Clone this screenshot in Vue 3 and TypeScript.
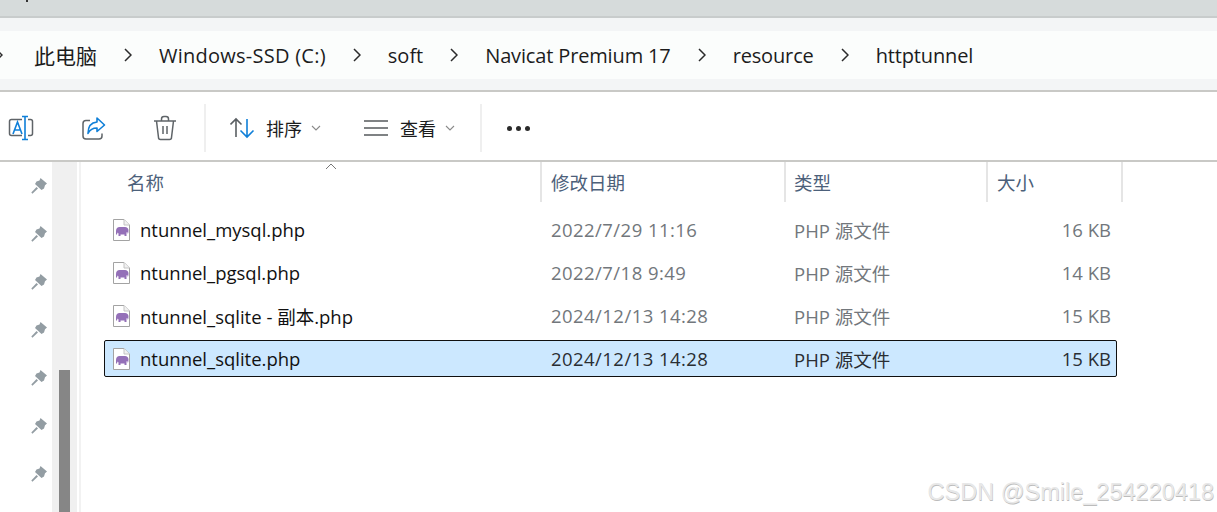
<template>
  <div class="explorer">
    <div class="titlebar"></div>

    <div class="address">
      <div class="crumbs">
        <svg class="chev first" viewBox="0 0 8 14"><polyline points="1 1 7 7 1 13" /></svg>
        <template v-for="(c, i) in crumbs" :key="c.label">
          <span class="crumb" :class="c.cls">{{ c.label }}</span>
          <svg v-if="i < crumbs.length - 1" class="chev" viewBox="0 0 8 14"><polyline points="1 1 7 7 1 13" /></svg>
        </template>
      </div>
    </div>

    <div class="toolbar">
      <button class="tool">
        <svg class="ic" viewBox="0 0 26 26" fill="none">
          <path d="M14 4.500H3.500a2 2 0 0 0-2 2v12a2 2 0 0 0 2 2H14M20 4.500h2.500a2 2 0 0 1 2 2v12a2 2 0 0 1-2 2H20" stroke="#5f6468" stroke-width="1.500" />
          <path d="M14 1.500h6M14 24.500h6M17 1.500V24.500" stroke="#0f7fd8" stroke-width="1.600" />
          <path d="M5 19 9.500 7 14 19M6.500 15h6" stroke="#0f7fd8" stroke-width="1.600" />
        </svg>
      </button>
      <button class="tool">
        <svg class="ic" viewBox="0 0 26 26" fill="none">
          <path d="M10 5.500H6a3 3 0 0 0-3 3V21a3 3 0 0 0 3 3h13a3 3 0 0 0 3-3v-2.500" stroke="#5f6468" stroke-width="1.500" />
          <path d="M17 3 24.500 10 17 16.500V13C13 13 10 14.500 8 18.500 8 12 11 7.500 17 7z" stroke="#0f7fd8" stroke-width="1.600" stroke-linejoin="round" />
        </svg>
      </button>
      <button class="tool">
        <svg class="ic" viewBox="0 0 26 26" fill="none" stroke="#5f6468" stroke-width="1.500">
          <path d="M2 6h22M9.500 6V4A2.500 2.500 0 0 1 12 1.500h2A2.500 2.500 0 0 1 16.500 4v2M4.500 6l2 16.500a2 2 0 0 0 2 2h9a2 2 0 0 0 2-2L21.500 6M11 11v8M15 11v8" />
        </svg>
      </button>
      <div class="tool-sep"></div>
      <button class="tool-menu sort">
        <svg class="ic" viewBox="0 0 26 26" fill="none" stroke-width="1.600">
          <path d="M6 22V4M.5 9.500 6 4l5.500 5.500" stroke="#5a5f63" />
          <path d="M17 4v18M10.500 15.500 17 22l6.500-6.500" stroke="#0f7fd8" />
        </svg>
        <span>排序</span>
        <svg class="caret" viewBox="0 0 10 6"><polyline points="1 1 5 5 9 1" /></svg>
      </button>
      <button class="tool-menu view">
        <svg class="lines" viewBox="0 0 24 16" fill="none" stroke="#55595c" stroke-width="1.500">
          <path d="M0 1h24M0 8h24M0 15h24" />
        </svg>
        <span>查看</span>
        <svg class="caret" viewBox="0 0 10 6"><polyline points="1 1 5 5 9 1" /></svg>
      </button>
      <div class="tool-sep last"></div>
      <div class="dots"><i></i><i></i><i></i></div>
    </div>

    <div class="main">
      <aside class="side">
        <div class="pins">
          <svg v-for="n in 7" :key="n" class="pin" viewBox="0 0 16 16">
            <path d="M9.500 0 16 5.500 14 7.200 13 10.500 10.500 12 4 6 5.500 3.500 8.500 2.500z" />
            <path d="M5.500 9 .3 14.600 1.400 15.700 7 10.500z" />
          </svg>
        </div>
        <div class="track"><div class="thumb"></div></div>
      </aside>

      <section class="list">
        <svg class="sort-up" viewBox="0 0 12 7"><polyline points="1 6 6 1 11 6" /></svg>
        <div class="head">
          <div v-for="c in columns" :key="c.label" class="hcell" :class="c.cls">{{ c.label }}</div>
        </div>
        <div class="rows">
          <div v-for="f in files" :key="f.name" class="row" :class="{ selected: f.selected }">
            <div class="cell name">
              <svg class="file" viewBox="0 0 17 22">
                <path d="M.5.500H11L16.500 6v15.500H.5z" fill="#fff" stroke="#a3a3a3" />
                <path d="M11 .5V6h5.500" fill="#f1f1f1" stroke="#c4c4c4" />
                <path d="M3 12c0-2.500 1.500-4 3.500-4H12c2 0 3.500 1.500 3.500 3.500 0 1.500-.2 2.500-.6 3.500l-.6-2-.8.5V17h-2v-1.500H7.500V17h-2v-2.500l-1-1-.5 2H3z" fill="#9470b8" />
              </svg>
              <span>{{ f.name }}</span>
            </div>
            <div class="cell date">{{ f.date }}</div>
            <div class="cell type">PHP 源文件</div>
            <div class="cell size">{{ f.size }}</div>
          </div>
        </div>
      </section>
    </div>

    <div class="watermark">CSDN @Smile_254220418</div>
  </div>
</template>

<script setup lang="ts">
const crumbs = [
  { label: '此电脑', cls: 'cjk' },
  { label: 'Windows-SSD (C:)', cls: 'drive' },
  { label: 'soft', cls: '' },
  { label: 'Navicat Premium 17', cls: 'tight' },
  { label: 'resource', cls: 'tight' },
  { label: 'httptunnel', cls: 'tight' },
]

const columns = [
  { label: '名称', cls: 'name' },
  { label: '修改日期', cls: 'date' },
  { label: '类型', cls: 'type' },
  { label: '大小', cls: 'size' },
]

const files = [
  { name: 'ntunnel_mysql.php', date: '2022/7/29 11:16', size: '16 KB', selected: false },
  { name: 'ntunnel_pgsql.php', date: '2022/7/18 9:49', size: '14 KB', selected: false },
  { name: 'ntunnel_sqlite - 副本.php', date: '2024/12/13 14:28', size: '15 KB', selected: false },
  { name: 'ntunnel_sqlite.php', date: '2024/12/13 14:28', size: '15 KB', selected: true },
]
</script>

<style>
html, body { margin: 0; background: #fff; }
</style>

<style scoped>
.explorer {
  position: relative;
  width: 1217px;
  height: 512px;
  overflow: hidden;
  display: flex;
  flex-direction: column;
  background: #fff;
  font-family: "Open Sans", "Noto Sans CJK SC", sans-serif;
  font-size: 20px;
  color: #1c1c1c;
}
.titlebar {
  position: relative;
  height: 16px;
  background: #d6dbdb;
  border-bottom: 2px solid #c8cccc;
  flex-shrink: 0;
}
/* bit of cut off text at the very top */
.titlebar::before {
  content: "";
  position: absolute;
  left: 26px;
  top: 0;
  width: 2px;
  height: 2px;
  background: #333;
}

/* address bar */
.address {
  height: 74px;
  padding: 13px 0 11px;
  box-sizing: border-box;
  background: #f3f5f6;
  border-bottom: 2px solid #c9c9c6;
  flex-shrink: 0;
}
.crumbs {
  height: 48px;
  background: #fbfdfc;
  display: flex;
  align-items: center;
  gap: 27px;
  margin-left: -5px;
}
.crumb { white-space: nowrap; }
.crumb.cjk { font-size: 21px; }
.crumb.drive { letter-spacing: 0.25px; }
.crumb.tight { letter-spacing: -0.15px; }
.chev {
  width: 8px;
  height: 14px;
  flex-shrink: 0;
  fill: none;
  stroke: #2b2b2b;
  stroke-width: 1.5;
}
.chev.first { margin-right: 4px; }

/* command bar */
.toolbar {
  height: 70px;
  box-sizing: border-box;
  padding-top: 4px;
  border-bottom: 2px solid #c9c9c6;
  display: flex;
  align-items: center;
  flex-shrink: 0;
}
.tool, .tool-menu {
  display: flex;
  align-items: center;
  border: none;
  background: none;
  padding: 0;
  font: inherit;
  font-size: 18px;
  color: #1c1c1c;
}
.tool { width: 26px; height: 26px; margin-left: 46px; }
.tool:first-child { margin-left: 8px; }
.ic { width: 26px; height: 26px; display: block; flex-shrink: 0; }
.tool-sep {
  width: 2px;
  height: 48px;
  background: #efefef;
  margin-left: 26px;
}
.tool-sep.last { margin-left: 25px; }
.tool-menu.sort { margin-left: 24px; }
.tool-menu.view { margin-left: 43px; }
.tool-menu.sort span { margin-left: 10px; }
.tool-menu.view span { margin-left: 12px; }
.lines { width: 24px; height: 16px; display: block; }
.caret {
  width: 10px;
  height: 6px;
  margin-left: 9px;
  fill: none;
  stroke: #8a8a8a;
  stroke-width: 1.1;
}
.dots { display: flex; gap: 4px; margin-left: 25px; }
.dots i { width: 5px; height: 5px; border-radius: 50%; background: #2b2b2b; }

/* main area */
.main { flex: 1; display: flex; min-height: 0; }
.side { width: 81px; display: flex; flex-shrink: 0; box-sizing: border-box; border-right: 2px solid #f2f2f2; }
.pins {
  width: 52px;
  display: flex;
  flex-direction: column;
  align-items: flex-end;
  gap: 32px;
  padding: 16px 5px 0 0;
  box-sizing: border-box;
}
.pin { width: 16px; height: 16px; fill: #939da3; flex-shrink: 0; }
.track {
  width: 25px;
  background: #f0f0f0;
  padding: 208px 7px 0;
  box-sizing: border-box;
}
.thumb { height: 142px; width: 11px; background: #868686; }

/* file list */
.list { position: relative; flex: 1; min-width: 0; }
.sort-up {
  position: absolute;
  left: 244px;
  top: 1px;
  width: 12px;
  height: 7px;
  fill: none;
  stroke: #777;
  stroke-width: 1;
}
.head {
  display: flex;
  height: 40px;
  color: #4c607a;
  font-size: 18.5px;
}
.hcell {
  display: flex;
  align-items: center;
  box-sizing: border-box;
  border-right: 2px solid #e5e5e5;
  height: 40px;
  padding-left: 9px;
}
.hcell.name { width: 461px; padding-left: 46px; }
.hcell.date { width: 244px; }
.hcell.type { width: 202px; padding-left: 8px; }
.hcell.size { width: 135px; }
.rows {
  display: flex;
  flex-direction: column;
  gap: 6px;
  padding: 9px 0 0 23px;
}
.row {
  display: flex;
  align-items: center;
  width: 1013px;
  height: 37px;
  box-sizing: border-box;
  border: 1px solid transparent;
}
.row.selected {
  background: #cce8ff;
  border-color: #101010;
  border-radius: 2px;
}
.cell { white-space: nowrap; color: #72777c; font-size: 18.5px; }
.cell.name {
  width: 446px;
  display: flex;
  align-items: center;
  gap: 10px;
  padding-left: 8px;
  box-sizing: border-box;
  color: #111;
}
.file { width: 17px; height: 22px; flex-shrink: 0; }
.cell.date { width: 243px; letter-spacing: 0.45px; }
.cell.type { width: 203px; }
.cell.size { width: 114px; text-align: right; box-sizing: border-box; }
.row.selected .cell { color: #2a2e33; }
.row.selected .cell.name { color: #111; }

.watermark {
  position: absolute;
  right: 3px;
  bottom: 6px;
  font-family: "Liberation Sans", sans-serif;
  font-size: 23.5px;
  color: #e8e8e8;
  text-shadow: 0.5px 0.5px 0.5px #bcbcbc;
  white-space: nowrap;
}
</style>
